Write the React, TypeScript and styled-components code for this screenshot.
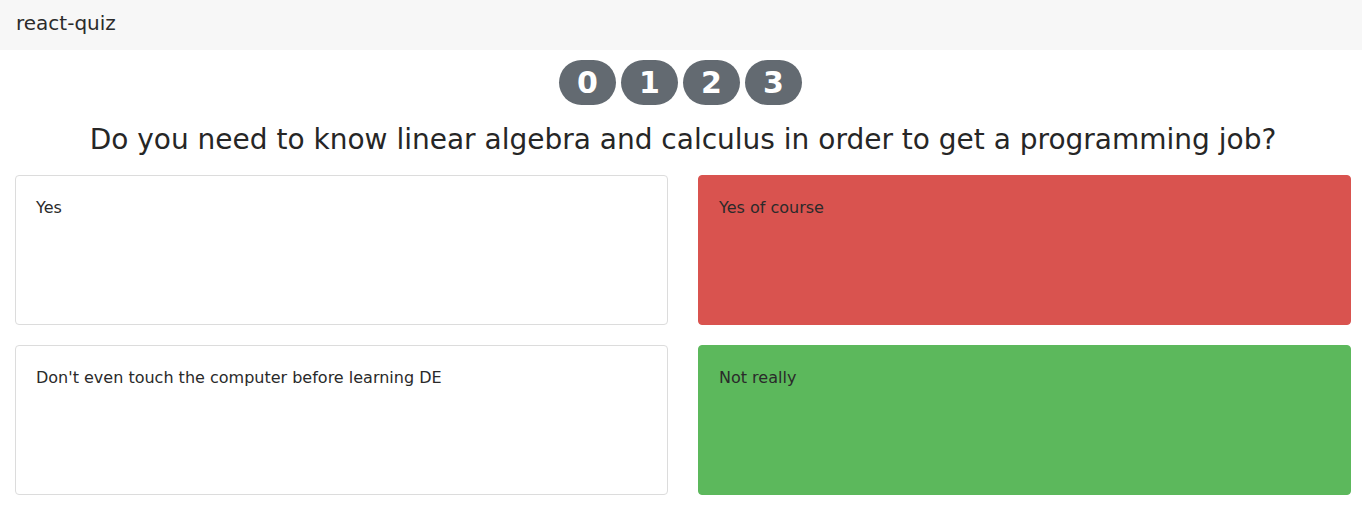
import React from "react";
import styled, { createGlobalStyle } from "styled-components";

const GlobalStyle = createGlobalStyle`
  html, body { margin: 0; padding: 0; background: #fff; }
  body {
    font-family: "DejaVu Sans", "Liberation Sans", sans-serif;
    color: #212529;
    font-size: 16px;
    line-height: 1.5;
  }
  * { box-sizing: border-box; }
`;

const NavBar = styled.nav`
  height: 50px;
  background: #f7f7f7;
  display: flex;
  align-items: center;
  padding: 0 16px;
`;

const Brand = styled.span`
  font-size: 20px;
  color: #2b2b2b;
  line-height: 1;
  padding-bottom: 4px;
`;

const Main = styled.main`
  padding: 10px 11px 0 15px;
`;

const BadgeRow = styled.div`
  display: flex;
  justify-content: center;
  gap: 5px;
  padding-right: 5px;
`;

const Badge = styled.span`
  display: inline-block;
  background: #636a71;
  color: #fff;
  font-weight: bold;
  font-size: 30px;
  line-height: 1;
  padding: 7.5px 18px;
  border-radius: 999px;
  height: 45px;
  min-width: 57px;
  text-align: center;
`;

const Question = styled.h2`
  margin: 18px 0 18px;
  font-size: 28px;
  font-weight: normal;
  line-height: 1.2;
  text-align: center;
  color: #262626;
`;

const Grid = styled.div`
  display: grid;
  grid-template-columns: 653px 653px;
  column-gap: 30px;
  row-gap: 20px;
`;

type Tone = "plain" | "danger" | "success";

const Card = styled.div<{ $tone: Tone }>`
  height: 150px;
  border-radius: 4px;
  padding: 20px;
  font-size: 16px;
  line-height: 24px;
  color: #2a2a2a;
  border: 1px solid
    ${(p) =>
      p.$tone === "plain" ? "#dcdcdc" : p.$tone === "danger" ? "#d9534f" : "#5cb85c"};
  background: ${(p) =>
    p.$tone === "plain" ? "#fff" : p.$tone === "danger" ? "#d9534f" : "#5cb85c"};
`;

const answers: { text: string; tone: Tone }[] = [
  { text: "Yes", tone: "plain" },
  { text: "Yes of course", tone: "danger" },
  { text: "Don't even touch the computer before learning DE", tone: "plain" },
  { text: "Not really", tone: "success" },
];

export default function App() {
  return (
    <>
      <GlobalStyle />
      <NavBar>
        <Brand>react-quiz</Brand>
      </NavBar>
      <Main>
        <BadgeRow>
          {[0, 1, 2, 3].map((n) => (
            <Badge key={n}>{n}</Badge>
          ))}
        </BadgeRow>
        <Question>
          Do you need to know linear algebra and calculus in order to get a programming job?
        </Question>
        <Grid>
          {answers.map((a) => (
            <Card key={a.text} $tone={a.tone}>
              {a.text}
            </Card>
          ))}
        </Grid>
      </Main>
    </>
  );
}
